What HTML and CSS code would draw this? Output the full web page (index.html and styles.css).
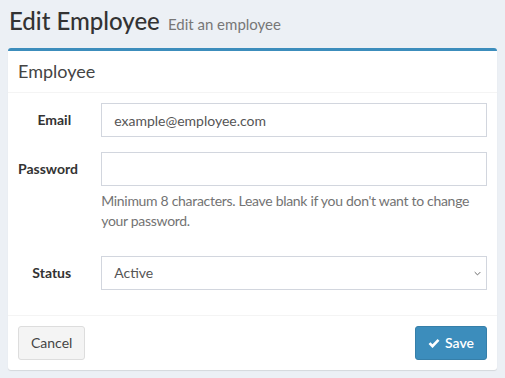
FILE: index.html
```html
<!DOCTYPE html>
<html lang="en">
<head>
  <meta charset="UTF-8"/>
  <meta name="viewport" content="width=device-width, initial-scale=1.0"/>
  <title>Edit Employee</title>
  <link rel="stylesheet" href="styles.css">
</head>
<body>
  <!-- ========== PAGE HEADER ========== -->
  <section class="content-header">
    <h1>Edit Employee <small>Edit an employee</small></h1>
  </section>

  <!-- ========== FORM BOX ========== -->
  <form class="box">
    <div class="box-header">
      <h3 class="box-title">Employee</h3>
    </div>

    <div class="box-body">
      <div class="form-group">
        <label class="col-label" for="email">Email</label>
        <div class="col-field">
          <input class="form-control" id="email" type="email" value="example@employee.com">
        </div>
      </div>

      <div class="form-group">
        <label class="col-label" for="password">Password</label>
        <div class="col-field">
          <input class="form-control" id="password" type="password">
          <p class="help-block">Minimum 8 characters. Leave blank if you don't want to change your password.</p>
        </div>
      </div>

      <div class="form-group">
        <label class="col-label" for="status">Status</label>
        <div class="col-field">
          <div class="select-wrap">
            <select class="form-control" id="status">
              <option selected>Active</option>
              <option>Inactive</option>
            </select>
            <svg class="select-caret" viewBox="0 0 10 6"><path d="M1 1l4 4 4-4"/></svg>
          </div>
        </div>
      </div>
    </div>

    <div class="box-footer">
      <button type="button" class="btn btn-default">Cancel</button>
      <button type="submit" class="btn btn-primary">
        <svg class="icon-check" viewBox="0 0 12 10"><path d="M1.5 5.2l3 3 6-6.4"/></svg>
        Save
      </button>
    </div>
  </form>
</body>
</html>
```

FILE: styles.css
```css
*{margin:0;padding:0;box-sizing:border-box}
body{font-family:'Lato','Liberation Sans',sans-serif;font-size:14px;line-height:20px;color:#333;background:#ecf0f5;padding:8px}

/* --- page header --- */
.content-header h1{font-size:24px;line-height:26px;font-weight:500;color:#333;padding-left:1px}
.content-header h1 small{font-size:15px;font-weight:400;color:#777;padding-left:2px}

/* --- box --- */
.box{margin-top:11px;background:#fff;border-top:3px solid #3c8dbc;border-radius:3px;box-shadow:0 1px 1px rgba(0,0,0,.1)}
.box-header{padding:10px;border-bottom:1px solid #f4f4f4}
.box-title{font-size:18px;line-height:21px;font-weight:400;color:#444}
.box-body{padding:10px}
.box-footer{padding:10px;border-top:1px solid #f4f4f4;display:flex;justify-content:space-between}

/* --- horizontal form --- */
.form-group{display:grid;grid-template-columns:16.6667% 83.3333%;margin:0 -15px 15px}
.col-label{min-width:0;padding:7px 15px 0;text-align:right;font-weight:700;color:#333;white-space:nowrap}
.col-field{min-width:0;padding:0 15px}
.form-control{display:block;width:100%;height:34px;padding:6px 12px;border:1px solid #d2d6de;border-radius:0;background:#fff;color:#555;font:14px/20px 'Lato','Liberation Sans',sans-serif;outline:none}
.form-control:focus{border-color:#3c8dbc}
.help-block{margin:5px 0 10px;color:#737373;letter-spacing:-.3px}
.select-wrap{position:relative}
.select-wrap select{appearance:none;-webkit-appearance:none}
.select-caret{position:absolute;right:6px;top:15px;width:7px;height:5px;fill:none;stroke:#666;stroke-width:1.4;pointer-events:none}

/* --- buttons --- */
.btn{display:inline-flex;align-items:center;gap:5px;height:34px;padding:6px 12px;border:1px solid transparent;border-radius:3px;font:14px/20px 'Lato','Liberation Sans',sans-serif;cursor:pointer}
.btn-default{background:#f4f4f4;border-color:#ddd;color:#444}
.btn-primary{background:#3c8dbc;border-color:#367fa9;color:#fff;font-weight:600}
.icon-check{width:12px;height:10px;fill:none;stroke:#fff;stroke-width:2.6}
```
